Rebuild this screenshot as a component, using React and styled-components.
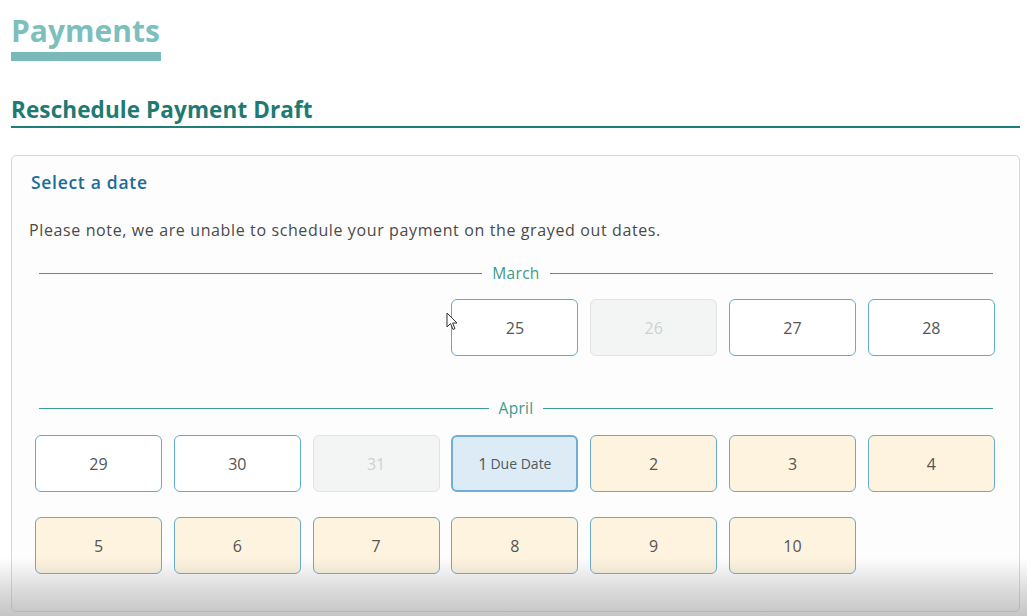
import React from "react";
import styled, { createGlobalStyle } from "styled-components";

const Global = createGlobalStyle`
  html, body { margin: 0; padding: 0; background: #ffffff; }
  body { font-family: "Open Sans", "Noto Sans", sans-serif; color: #444; overflow: hidden; }
  * { box-sizing: border-box; }
`;

const Page = styled.div`
  position: relative;
  width: 1027px;
  height: 616px;
  overflow: hidden;
  padding: 0 7px 0 11px;
  display: flex;
  flex-direction: column;
`;

const PageTitle = styled.h1`
  margin: 12px 0 0;
  font-size: 30px;
  line-height: 38px;
  font-weight: 700;
  color: #7cbfbe;
  letter-spacing: 0px;
`;

const TitleBar = styled.div`
  width: 150px;
  height: 9px;
  margin-top: 2px;
  background: #7ab9b9;
`;

const SectionHeader = styled.div`
  margin-top: 35px;
  border-bottom: 2px solid #1f7d7a;
  padding-bottom: 3px;
`;

const SectionTitle = styled.h2`
  margin: 0;
  font-size: 22.5px;
  line-height: 27px;
  font-weight: 700;
  color: #1e7a72;
  letter-spacing: 0.1px;
`;

const Card = styled.div`
  margin-top: 27px;
  flex: 1;
  margin-bottom: 4px;
  border: 1px solid #d6d8d8;
  border-radius: 5px;
  background: #fdfdfd;
  padding: 14px 23px 0 17px;
`;

const CardTitle = styled.h3`
  margin: 0 0 0 2px;
  font-size: 17.5px;
  line-height: 24px;
  font-weight: 600;
  color: #1b6d98;
  letter-spacing: 0.7px;
`;

const Note = styled.p`
  margin: 25px 0 0;
  font-size: 16px;
  line-height: 22px;
  color: #4a4a4a;
  letter-spacing: 0.62px;
`;

const Month = styled.div`
  margin: ${(p) => p.$top}px 3px 0 10px;
  display: flex;
  align-items: center;
  gap: 10px;
  &::before, &::after {
    content: "";
    flex: 1;
    height: 1px;
    background: #3d9b9a;
  }
`;

const MonthLabel = styled.span`
  font-size: 15.5px;
  line-height: 20px;
  color: #3d9a8c;
  letter-spacing: 0.3px;
`;

const Grid = styled.div`
  margin: ${(p) => p.$top}px 0 0 6px;
  display: grid;
  grid-template-columns: repeat(7, 127px);
  column-gap: 11.8px;
  row-gap: 25px;
`;

const tones = {
  open: { bg: "#ffffff", border: "#63aad2", color: "#555" },
  blocked: { bg: "#f3f5f5", border: "#e1e4e4", color: "#cdd1d1" },
  due: { bg: "#dcebf6", border: "#6cb0d9", color: "#555" },
  soon: { bg: "#fdf3df", border: "#6aa9c9", color: "#555" },
};

const Day = styled.div`
  grid-column: ${(p) => p.$col || "auto"};
  height: 57px;
  border: ${(p) => (p.$tone === "due" ? 2 : 1.5)}px solid ${(p) => tones[p.$tone].border};
  border-radius: 6px;
  background: ${(p) => tones[p.$tone].bg};
  color: ${(p) => tones[p.$tone].color};
  display: flex;
  align-items: center;
  justify-content: center;
  gap: 3px;
  font-size: 16px;
`;

const DueText = styled.span`
  font-size: 14px;
  color: #4f5a63;
`;

const Shade = styled.div`
  position: absolute;
  left: 0;
  right: 0;
  bottom: 0;
  height: 58px;
  background: linear-gradient(to bottom, rgba(150,150,150,0) 0%, rgba(150,150,150,0.33) 55%, rgba(140,140,140,0.5) 100%);
  pointer-events: none;
`;

const Cursor = styled.svg`
  position: absolute;
  left: 446px;
  top: 312px;
`;

const april = [
  { d: "29", t: "open" },
  { d: "30", t: "open" },
  { d: "31", t: "blocked" },
  { d: "1", t: "due" },
  { d: "2", t: "soon" },
  { d: "3", t: "soon" },
  { d: "4", t: "soon" },
  { d: "5", t: "soon" },
  { d: "6", t: "soon" },
  { d: "7", t: "soon" },
  { d: "8", t: "soon" },
  { d: "9", t: "soon" },
  { d: "10", t: "soon" },
];

const march = [
  { d: "25", t: "open", col: 4 },
  { d: "26", t: "blocked" },
  { d: "27", t: "open" },
  { d: "28", t: "open" },
];

export default function App() {
  return (
    <>
      <Global />
      <Page>
        <PageTitle>Payments</PageTitle>
        <TitleBar />
        <SectionHeader>
          <SectionTitle>Reschedule Payment Draft</SectionTitle>
        </SectionHeader>
        <Card>
          <CardTitle>Select a date</CardTitle>
          <Note>Please note, we are unable to schedule your payment on the grayed out dates.</Note>
          <Month $top={22}>
            <MonthLabel>March</MonthLabel>
          </Month>
          <Grid $top={16}>
            {march.map((m) => (
              <Day key={m.d} $tone={m.t} $col={m.col}>{m.d}</Day>
            ))}
          </Grid>
          <Month $top={42}>
            <MonthLabel>April</MonthLabel>
          </Month>
          <Grid $top={17}>
            {april.map((m) => (
              <Day key={m.d} $tone={m.t}>
                {m.d}
                {m.t === "due" && <DueText>Due Date</DueText>}
              </Day>
            ))}
          </Grid>
        </Card>
        <Shade />
        <Cursor width="12" height="20" viewBox="0 0 12 20">
          <path d="M1 1 L1 15 L4.5 11.5 L7 17.5 L9 16.6 L6.6 11 L11 11 Z" fill="#fff" stroke="#333" strokeWidth="1" strokeLinejoin="round" />
        </Cursor>
      </Page>
    </>
  );
}
